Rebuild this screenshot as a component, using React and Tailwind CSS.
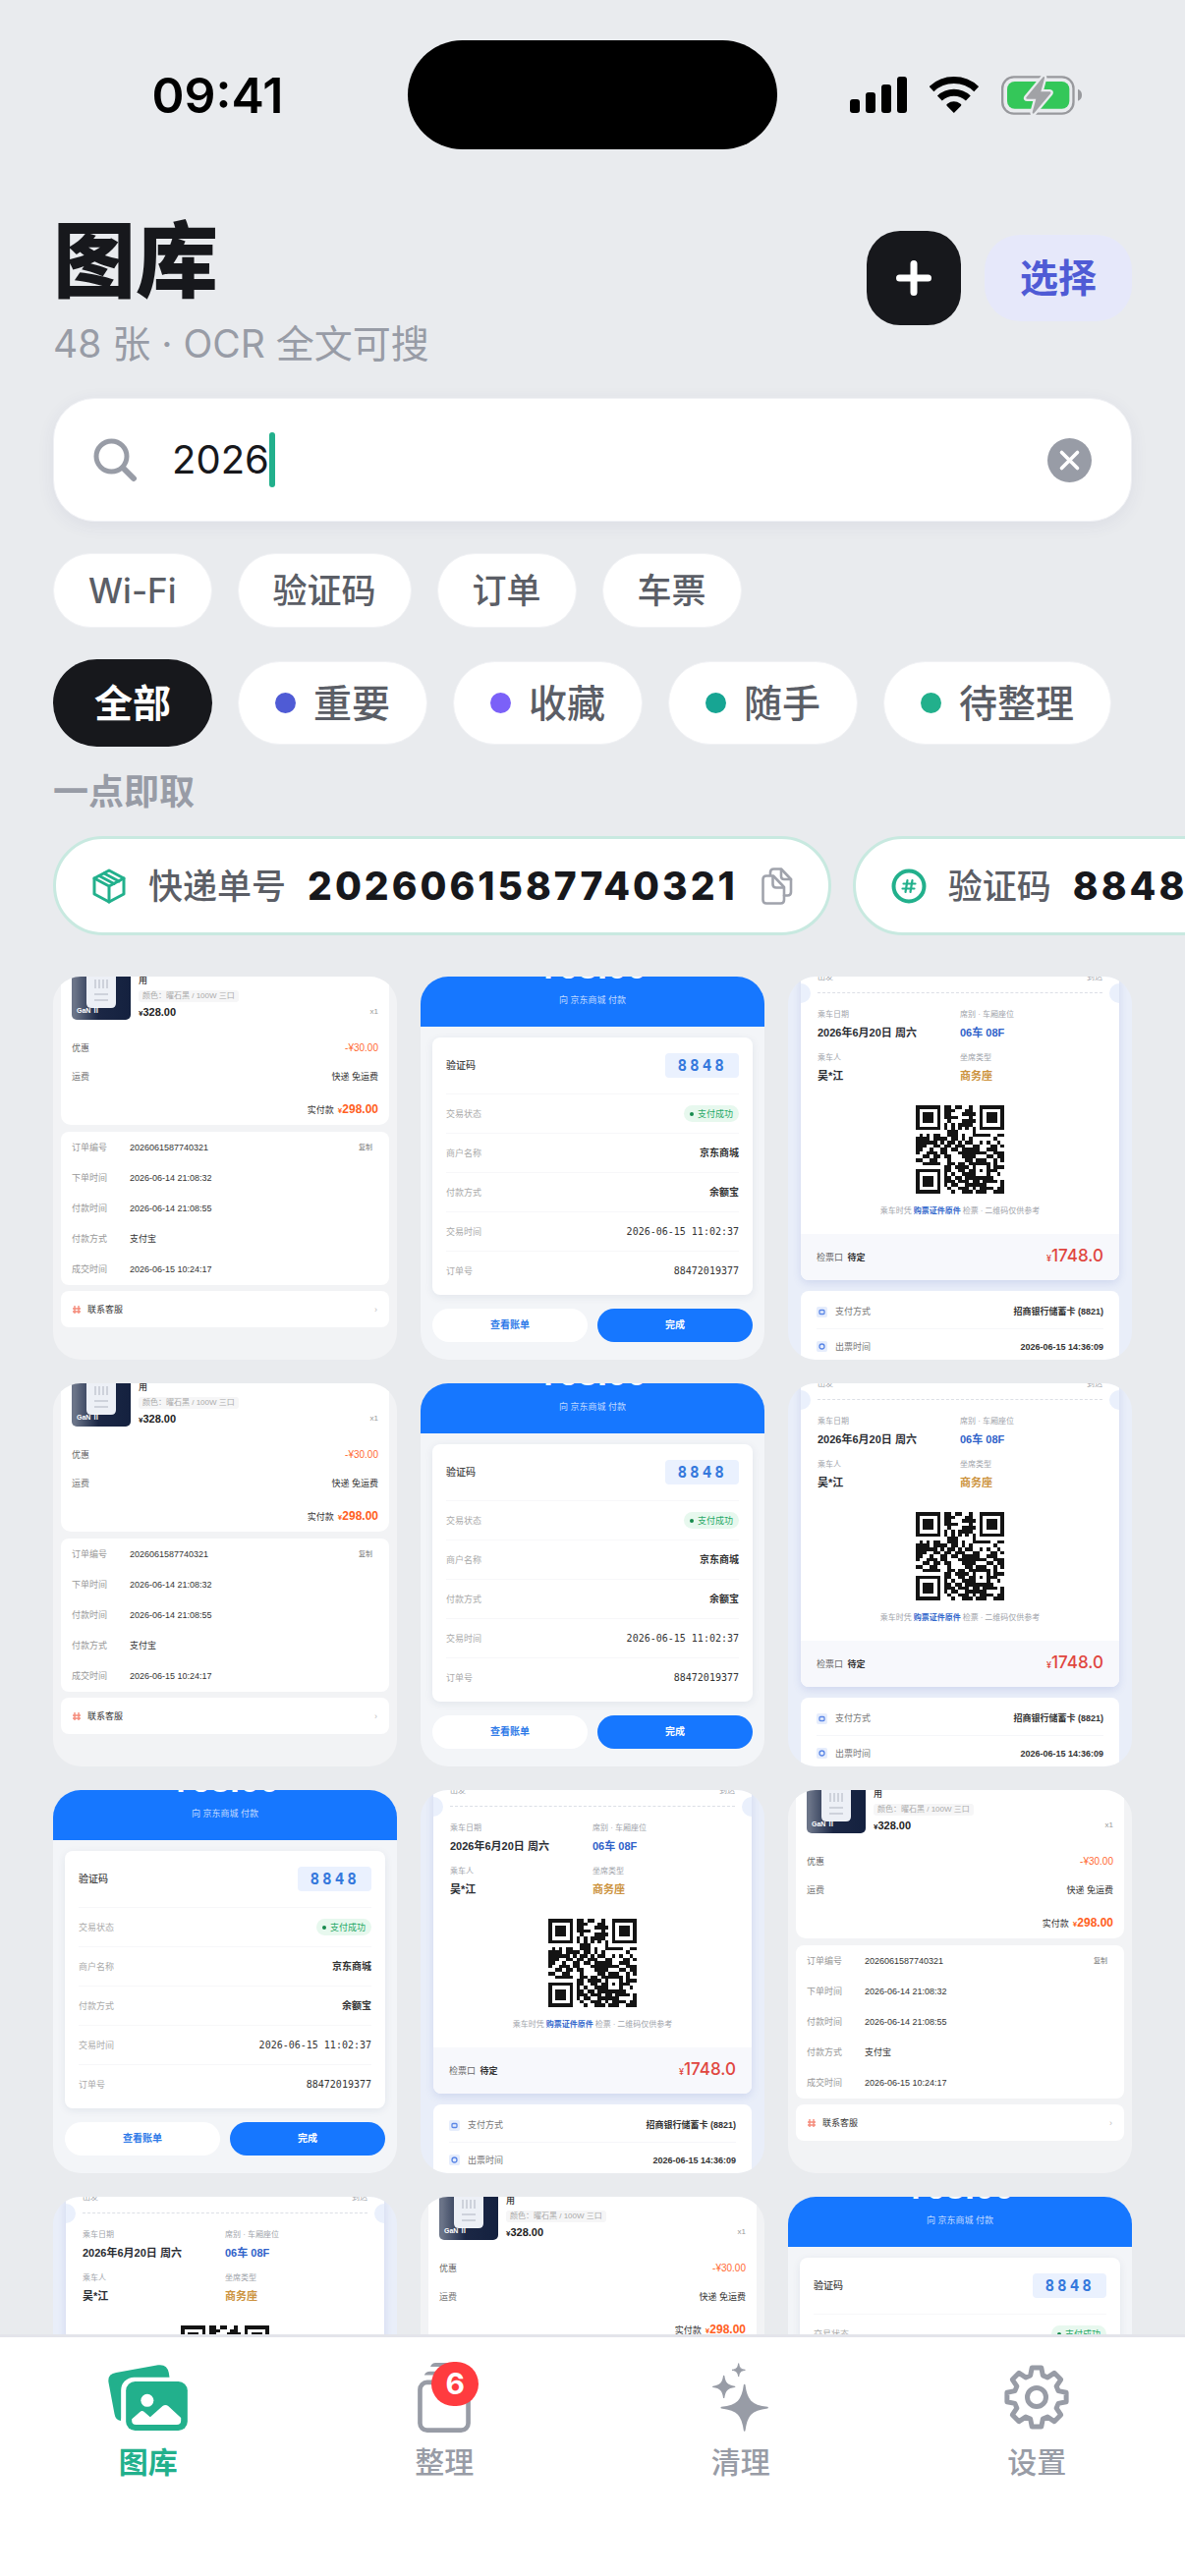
import React, { useState } from 'react';
import clsx from 'clsx';

const quickSearches = ['Wi-Fi', '验证码', '订单', '车票'];

const filters = [
  { id: 'all', label: '全部' },
  { id: 'important', label: '重要', dot: 'bg-[#4f5bd5]' },
  { id: 'favorite', label: '收藏', dot: 'bg-[#7b61f8]' },
  { id: 'casual', label: '随手', dot: 'bg-[#17a593]' },
  { id: 'pending', label: '待整理', dot: 'bg-[#22b08c]' }
];

const shots = [
  'order', 'payment', 'ticket',
  'order', 'payment', 'ticket',
  'payment', 'ticket', 'order',
  'ticket', 'order', 'payment'
];

const qrRows = [
  '1111111011011001001111111',
  '1000001011100011001000001',
  '1011101011000111101011101',
  '1011101011110001001011101',
  '1011101001000111101011101',
  '1000001010101111001000001',
  '1111111010101010101111111',
  '0000000001110000100000000',
  '0101011001110100111110011',
  '1111011110110101000000100',
  '1111110101101011001010010',
  '1110011011011100110001101',
  '1100100110110111110011100',
  '1001110110001111111100111',
  '0011011011000111100011011',
  '1100110001000011011100101',
  '0011111001101101111110100',
  '0000000011011110100010111',
  '1111111011001101101011100',
  '1000001010100111100010010',
  '1011101011011011111111000',
  '1011101011101110110111101',
  '1011101010110011111100001',
  '1000001001001110101111011',
  '1111111000100111011100111'
];

const qrPath = qrRows
  .map((row, y) => row.split('').map((c, x) => (c === '1' ? `M${x} ${y}h1v1h-1z` : '')).join(''))
  .join('');

// Eight-tooth gear outline
const gearPoints = [];
for (let i = 0; i < 8; i++) {
  [[-16, 23], [-9, 30.5], [9, 30.5], [16, 23]].forEach(([offset, r]) => {
    const a = ((i * 45 + offset - 90) * Math.PI) / 180;
    gearPoints.push(`${(33 + r * Math.cos(a)).toFixed(2)},${(33 + r * Math.sin(a)).toFixed(2)}`);
  });
}

// Status bar icons
const SignalIcon = () => (
  <svg className="w-[58px] h-[37px]" viewBox="0 0 174 111">
    <rect x="0" y="69" width="30" height="42" rx="9" />
    <rect x="48" y="48" width="30" height="63" rx="9" />
    <rect x="96" y="24" width="30" height="87" rx="9" />
    <rect x="144" y="0" width="30" height="111" rx="9" />
  </svg>
);

const WifiIcon = () => (
  <svg className="w-[50px] h-[37px]" viewBox="0 0 150 111">
    <g fill="none" stroke="#000" strokeWidth="21">
      <path d="M6 38A100 100 0 0 1 143 38" />
      <path d="M31 66A63 63 0 0 1 118 66" />
    </g>
    <path d="M74.5 111L53 89Q50 86 54 83Q74 69 95 83Q99 86 96 89Z" />
  </svg>
);

const BatteryIcon = () => (
  <svg className="w-[82px] h-[40px]" viewBox="0 0 246 120">
    <rect x="3.500" y="4" width="217" height="112" rx="35" fill="none" stroke="#98999d" strokeWidth="7" />
    <rect x="18" y="18" width="190" height="83" rx="23" fill="#34c759" />
    <path d="M234 41Q246 46 246 59Q246 72 234 77Z" fill="#98999d" />
    <path
      d="M128 4L76 67Q74 71 79 71H106L95 112Q95 119 100 115L151 54Q153 49 148 49H121L132 8Q133 1 128 4Z"
      fill="#a1a2a6"
      stroke="#e9ebee"
      strokeWidth="14"
      paintOrder="stroke"
      strokeLinejoin="round"
    />
  </svg>
);

const SearchIcon = () => (
  <svg className="w-[45px] h-[45px] shrink-0" viewBox="0 0 45 45" fill="none" stroke="#989ca6" strokeLinecap="round">
    <circle cx="18.500" cy="18.500" r="15.500" strokeWidth="5" />
    <path d="M31 31L41 41" strokeWidth="6" />
  </svg>
);

const BoxIcon = () => (
  <svg className="w-[36px] h-[36px] shrink-0" viewBox="0 0 36 36" fill="none" stroke="#22b08c" strokeWidth="3" strokeLinejoin="round" strokeLinecap="round">
    <path d="M18 2L33 10V26L18 34L3 26V10Z" />
    <path d="M3 10L18 18L33 10M18 18V34" />
    <path d="M8 7.500L23 15.500M13 5L28 13" />
  </svg>
);

const HashIcon = () => (
  <svg className="w-[36px] h-[36px] shrink-0" viewBox="0 0 36 36" fill="none" stroke="#22b08c" strokeLinecap="round">
    <circle cx="18" cy="18" r="15.500" strokeWidth="4" />
    <path d="M16.500 12L14.500 24M21.500 12L19.500 24M12.500 15.500H24.500M11.500 20.500H23.500" strokeWidth="2.200" />
  </svg>
);

const CopyIcon = () => (
  <svg className="w-[32px] h-[38px] shrink-0" viewBox="0 0 32 38" fill="none" stroke="#a0a3ac" strokeWidth="2.600" strokeLinejoin="round" strokeLinecap="round">
    <path d="M9 8V5Q9 1.500 12.500 1.500H20L30 12V25Q30 28.500 26.500 28.500H23" />
    <path d="M20 2V9Q20 12 23 12H30" />
    <path d="M1.500 12Q1.500 8.500 5 8.500H12L23 20V33Q23 36.500 19.500 36.500H5Q1.500 36.500 1.500 33Z" />
    <path d="M11.500 9V17Q11.500 20.500 15 20.500H22.500" />
  </svg>
);

// Tab bar icons
const GalleryIcon = () => (
  <svg className="w-[81px] h-[67px]" viewBox="0 0 242 201">
    <path d="M24 24L152 1Q180 -3 185 25L190 60L60 110L38 171Q22 169 19 150L1 54Q-3 28 24 24Z" fill="#22b08c" />
    <rect x="39" y="38" width="220" height="180" rx="40" fill="#fff" />
    <rect x="54" y="51" width="188" height="150" rx="28" fill="#22b08c" />
    <circle cx="119" cy="109" r="19.500" fill="#fff" />
    <path d="M72 166L96 145Q103 138 110 144L128 160L166 126Q175 119 184 127L222 162V170Q222 183 209 183H85Q72 183 72 171Z" fill="#fff" />
  </svg>
);

const StackIcon = () => (
  <svg className="w-[54px] h-[71px]" viewBox="0 0 162 214" fill="#989ca6">
    <path d="M39 12Q43 0 55 0H107Q119 0 123 12Z" />
    <path d="M20 38Q24 26 38 26H124Q138 26 142 38Z" />
    <rect x="7" y="60" width="148" height="147" rx="22" fill="none" stroke="#989ca6" strokeWidth="14" />
  </svg>
);

const SparklesIcon = () => (
  <svg className="w-[57px] h-[70px]" viewBox="0 0 171 210" fill="#989ca6" stroke="#989ca6" strokeLinejoin="round">
    <path strokeWidth="5" d="M98 68C104 115 118 131 168 137C118 143 104 159 98 207C92 159 78 143 28 137C78 131 92 115 98 68Z" />
    <path strokeWidth="4" d="M35 40C38 62 46 70 68 73C46 76 38 84 35 106C32 84 24 76 2 73C24 70 32 62 35 40Z" />
    <path strokeWidth="3" d="M80 2C82 15 87 20 100 22C87 24 82 29 80 42C78 29 73 24 60 22C73 20 78 15 80 2Z" />
  </svg>
);

const GearIcon = () => (
  <svg className="w-[66px] h-[66px]" viewBox="0 0 66 66" fill="none" stroke="#989ca6" strokeWidth="5" strokeLinejoin="round">
    <polygon points={gearPoints.join(' ')} />
    <circle cx="33" cy="33" r="9.500" />
  </svg>
);

// Screenshot thumbnails
const OrderShot = () => (
  <div className="h-full px-2 bg-[#f2f3f5] text-[9px] leading-[12px] text-[#333]">
    <div className="h-[151px] px-[11px] bg-white rounded-b-[10px]">
      <div className="flex gap-2 h-[44px]">
        <div className="relative w-[60px] shrink-0 rounded-b-[5px] bg-linear-to-r from-[#6b7488] from-5% via-[#1b2745] via-45% to-[#14213f]">
          <svg className="absolute left-[15px] top-0 w-[30px] h-[32px]" viewBox="0 0 30 32">
            <path d="M0 0H30V27Q30 32 25 32H5Q0 32 0 27Z" fill="#edf0f6" />
            <path d="M9 3V12M13 3V12M17 3V12M21 3V12M8 18H22M8 24H22" stroke="#c3c8d2" strokeWidth="1.500" />
          </svg>
          <span className="absolute left-[5px] bottom-[3px] text-[7px] leading-[12px] font-bold text-white">GaN Ⅱ</span>
        </div>
        <div className="flex flex-col flex-1 justify-end">
          <div className="font-medium">用</div>
          <div className="self-start px-1 my-1 text-[8px] text-[#aaa] bg-[#f6f6f7] rounded-[3px]">颜色：曜石黑 / 100W 三口</div>
          <div className="flex justify-between">
            <span className="text-[11px] font-bold text-[#222]"><span className="text-[8px]">¥</span>328.00</span>
            <span className="text-[8px] text-[#999]">x1</span>
          </div>
        </div>
      </div>
      <div className="flex justify-between mt-[23px]">
        <span className="text-[#666]">优惠</span>
        <span className="text-[10px] text-[#ff6a33]">-¥30.00</span>
      </div>
      <div className="flex justify-between mt-[17px]">
        <span className="text-[#777]">运费</span>
        <span>快递 免运费</span>
      </div>
      <div className="flex justify-end items-baseline gap-1 mt-[21px]">
        <span>实付款</span>
        <span className="text-[12px] font-bold text-[#ff5f1f]"><span className="text-[8px]">¥</span>298.00</span>
      </div>
    </div>
    <dl className="flex flex-col justify-between h-[156px] mt-[7px] px-[11px] py-[10px] bg-white rounded-[8px]">
      {[
        ['订单编号', '2026061587740321'],
        ['下单时间', '2026-06-14 21:08:32'],
        ['付款时间', '2026-06-14 21:08:55'],
        ['付款方式', '支付宝'],
        ['成交时间', '2026-06-15 10:24:17']
      ].map(([label, value], i) => (
        <div key={label} className="flex">
          <dt className="w-[59px] text-[#999]">{label}</dt>
          <dd className="flex-1">{value}</dd>
          {i === 0 && <dd className="pr-[6px] text-[7px] text-[#777]">复制</dd>}
        </div>
      ))}
    </dl>
    <div className="flex items-center h-[37px] mt-[6px] px-[12px] bg-white rounded-[8px]">
      <svg className="w-[8px] h-[8px] mr-[7px]" viewBox="0 0 8 8" stroke="#f58a7a" strokeWidth="1.400" fill="none">
        <path d="M2 0V8M6 0V8M0 3H8M0 6H8" />
      </svg>
      <span>联系客服</span>
      <span className="ml-auto text-[#bbb]">›</span>
    </div>
  </div>
);

const PaymentShot = () => (
  <div className="h-full bg-[#f3f5f8] text-[9px] leading-[12px]">
    <div className="h-[51px] overflow-hidden text-center text-white bg-[#1677ff]">
      <div className="flex flex-col justify-end h-[30px]">
        <div className="text-[36px] leading-[30px] font-bold">¥68.00</div>
        <div className="h-[13px] shrink-0" />
        <div className="text-[#c2dbff]">向 京东商城 付款</div>
      </div>
    </div>
    <dl className="mx-3 mt-[11px] px-[14px] pb-1 bg-white rounded-[8px] shadow-[0_2px_8px_rgba(30,50,90,0.08)]">
      <div className="flex items-center justify-between h-[58px] border-b border-[#f7f7f9]">
        <dt className="text-[10px] font-medium text-[#444]">验证码</dt>
        <dd className="px-[12px] text-[16px] leading-[25px] font-bold tracking-[3px] text-[#3478dc] bg-[#eaf1fe] rounded-[4px] font-['DejaVu_Sans_Mono',monospace]">8848</dd>
      </div>
      <div className="flex items-center justify-between h-10 border-b border-[#f7f7f9]">
        <dt className="text-[#aaa]">交易状态</dt>
        <dd className="flex items-center gap-1 h-[17px] px-[6px] text-[#28a866] bg-[#e7f8ee] rounded-full">
          <span className="w-1 h-1 rounded-full bg-[#168a4c]" />
          支付成功
        </dd>
      </div>
      {[
        ['商户名称', '京东商城', false],
        ['付款方式', '余额宝', false],
        ['交易时间', '2026-06-15 11:02:37', true],
        ['订单号', '88472019377', true]
      ].map(([label, value, mono]) => (
        <div key={label} className="flex items-center justify-between h-10 border-b border-[#f7f7f9] last:border-0">
          <dt className="text-[#aaa]">{label}</dt>
          <dd className={clsx('text-[#333]', mono ? "text-[10px] font-['DejaVu_Sans_Mono',monospace]" : 'text-[10px] font-bold')}>
            {value}
          </dd>
        </div>
      ))}
    </dl>
    <div className="grid grid-cols-2 gap-[10px] mx-3 mt-[14px] text-[10px] font-bold text-center leading-[34px]">
      <div className="text-[#2f7be8] bg-white rounded-full">查看账单</div>
      <div className="text-white bg-[#1677ff] rounded-full">完成</div>
    </div>
  </div>
);

const TicketShot = () => (
  <div className="h-full px-[13px] bg-[#e9eef9] text-[8px] leading-[12px] text-[#a0a3aa]">
    <div className="relative h-[309px] overflow-hidden bg-white rounded-b-[8px] shadow-[0_3px_8px_rgba(60,90,180,0.15)]">
      <div className="flex justify-between h-[7px] items-end px-[17px]">
        <span>出发</span>
        <span>到达</span>
      </div>
      <div className="mx-[17px] mt-[9px] border-t border-dashed border-[#dcdfe6]" />
      <span className="absolute -left-[10px] top-[7px] w-5 h-5 rounded-full bg-[#eaf0fc]" />
      <span className="absolute -right-[10px] top-[7px] w-5 h-5 rounded-full bg-[#eaf0fc]" />
      <div className="grid grid-cols-2 gap-y-[12px] px-[17px] mt-[16px]">
        {[
          ['乘车日期', '2026年6月20日 周六', 'text-[#2a2d33]'],
          ['席别 · 车厢座位', '06车 08F', 'text-[#2f62c9]'],
          ['乘车人', '吴*江', 'text-[#2a2d33]'],
          ['坐席类型', '商务座', 'text-[#cc9340]']
        ].map(([label, value, color]) => (
          <div key={label}>
            <div>{label}</div>
            <div className={clsx('mt-[4px] text-[11px] leading-[16px] font-bold', color)}>{value}</div>
          </div>
        ))}
      </div>
      <svg className="block mx-auto mt-[22px] w-[90px] h-[90px]" viewBox="0 0 25 25" shapeRendering="crispEdges">
        <path d={qrPath} fill="#141414" />
      </svg>
      <div className="flex justify-center gap-[2px] mt-[12px]">
        <span>乘车时凭</span>
        <b className="text-[#3468cc]">购票证件原件</b>
        <span>检票</span>
        <span>·</span>
        <span>二维码仅供参考</span>
      </div>
      <div className="absolute inset-x-0 bottom-0 flex items-center justify-between h-[47px] px-[16px] text-[9px] bg-[#f7f8fc]">
        <span className="text-[#666]">检票口 <b className="ml-[2px] text-[#333]">待定</b></span>
        <span className="text-[17px] font-medium text-[#e0463f] font-['Inter',sans-serif]"><span className="text-[9px]">¥</span>1748.0</span>
      </div>
    </div>
    <div className="h-[78px] mt-[11px] px-[16px] pt-1 bg-white rounded-t-[8px] text-[9px]">
      {[
        ['支付方式', '招商银行储蓄卡 (8821)'],
        ['出票时间', '2026-06-15 14:36:09']
      ].map(([label, value], i) => (
        <div key={label} className="flex items-center h-[35px] border-b border-[#f5f6f9] last:border-0">
          <svg className="w-[11px] h-[11px] mr-2" viewBox="0 0 11 11" fill="none" stroke="#5b87e6" strokeWidth="1.300">
            <rect width="11" height="11" rx="2" fill="#e6edfc" stroke="none" />
            {i === 0 ? <rect x="3" y="3.500" width="5" height="4" rx="1" /> : <circle cx="5.500" cy="5.500" r="2.500" />}
          </svg>
          <span className="text-[#777]">{label}</span>
          <b className="ml-auto text-[#333]">{value}</b>
        </div>
      ))}
    </div>
  </div>
);

const shotViews = { order: OrderShot, payment: PaymentShot, ticket: TicketShot };
const shotLabels = { order: '订单截图', payment: '付款截图', ticket: '车票截图' };

const tabs = [
  { id: 'gallery', label: '图库', Icon: GalleryIcon },
  { id: 'organize', label: '整理', Icon: StackIcon, badge: 6 },
  { id: 'clean', label: '清理', Icon: SparklesIcon },
  { id: 'settings', label: '设置', Icon: GearIcon }
];

const Extract = ({ Icon, label, value }) => (
  <button type="button" className="flex items-center shrink-0 h-[101px] px-[36px] bg-white border-3 border-[#c8e9e0] rounded-full">
    <Icon />
    <span className="ml-[22px] text-[35px] leading-[48px] font-medium text-[#5b5e66]">{label}</span>
    <span className="ml-[22px] mr-[24px] text-[39px] leading-[48px] font-extrabold tracking-[3px] text-[#17181c]">{value}</span>
    <CopyIcon />
  </button>
);

const App = () => {
  const [query, setQuery] = useState('2026');
  const [filter, setFilter] = useState('all');
  const [tab, setTab] = useState('gallery');

  return (
    <div className="flex flex-col h-screen overflow-hidden bg-[#e9ebee] text-[#17181c] font-['Inter','Noto_Sans_CJK_SC',sans-serif]">
      {/* Status bar */}
      <div className="grid grid-cols-[1fr_auto_1fr] items-center shrink-0 pt-[41px]">
        <div className="pl-[28px] text-center text-[50px] leading-[60px] font-semibold text-black">09:41</div>
        <div className="w-[376px] h-[111px] rounded-full bg-black" />
        <div className="flex items-center justify-center gap-[23px] pr-[32px]">
          <SignalIcon />
          <WifiIcon />
          <BatteryIcon />
        </div>
      </div>

      <main className="flex-1 min-h-0 px-[54px] pt-[72px] overflow-y-auto [scrollbar-width:none]">
        <header className="flex items-start justify-between">
          <div>
            <h1 className="text-[84px] leading-[84px] font-black">图库</h1>
            <p className="mt-[18px] text-[39px] leading-[48px] text-[#989ca6]">48 张 · OCR 全文可搜</p>
          </div>
          <div className="flex items-center gap-[24px] pt-[11px]">
            <button type="button" aria-label="添加" className="flex items-center justify-center w-[96px] h-[96px] rounded-[34px] bg-[#17181c]">
              <svg className="w-[36px] h-[36px]" viewBox="0 0 36 36" stroke="#fff" strokeWidth="7" strokeLinecap="round">
                <path d="M18 3.500V32.500M3.500 18H32.500" />
              </svg>
            </button>
            <button type="button" className="h-[88px] px-[36px] rounded-[36px] bg-[#e6e8fa] text-[39px] leading-[48px] font-bold text-[#4f5bd5]">
              选择
            </button>
          </div>
        </header>

        {/* Search */}
        <div className="flex items-center h-[126px] mt-[31px] px-[40px] bg-white border border-[#f0f1f5] rounded-[42px] shadow-[0_4px_18px_rgba(60,60,120,0.07)]">
          <SearchIcon />
          <input
            type="text"
            aria-label="搜索"
            value={query}
            onChange={(e) => setQuery(e.target.value)}
            className="ml-[35px] text-[40px] leading-[56px] caret-[#22b08c] outline-none [field-sizing:content]"
          />
          <span className="w-[6px] h-[56px] rounded-full bg-[#22b08c]" />
          <button type="button" aria-label="清除" onClick={() => setQuery('')} className="ml-auto">
            <svg className="block w-[45px] h-[45px]" viewBox="0 0 45 45">
              <circle cx="22.500" cy="22.500" r="22.500" fill="#989ca6" />
              <path d="M14.500 14.500L30.500 30.500M30.500 14.500L14.500 30.500" stroke="#fff" strokeWidth="3.600" strokeLinecap="round" />
            </svg>
          </button>
        </div>

        <div className="flex gap-[26px] mt-[32px]">
          {quickSearches.map((text) => (
            <button
              key={text}
              type="button"
              onClick={() => setQuery(text)}
              className="h-[76px] px-[35px] bg-white border border-[#f1f2f5] rounded-full text-[35px] leading-[48px] font-medium text-[#5b5e66] whitespace-nowrap"
            >
              {text}
            </button>
          ))}
        </div>

        {/* Filters */}
        <div className="flex items-center gap-[26px] mt-[32px]">
          {filters.map((f) => (
            <button
              key={f.id}
              type="button"
              onClick={() => setFilter(f.id)}
              className={clsx(
                'flex items-center gap-[18px] rounded-full text-[39px] leading-[48px] whitespace-nowrap',
                filter === f.id
                  ? 'h-[89px] px-[42px] bg-[#17181c] font-bold text-white'
                  : 'h-[85px] px-[37px] bg-white border border-[#f1f2f5] font-medium text-[#5b5e66]'
              )}
            >
              {f.dot && <span className={clsx('w-[21px] h-[21px] rounded-full', f.dot)} />}
              {f.label}
            </button>
          ))}
        </div>

        <h2 className="mt-[22px] text-[36px] leading-[48px] font-bold text-[#989ca6]">一点即取</h2>
        <div className="flex gap-[22px] mt-[21px] -mr-[54px] overflow-x-auto [scrollbar-width:none]">
          <Extract Icon={BoxIcon} label="快递单号" value="2026061587740321" />
          <Extract Icon={HashIcon} label="验证码" value="8848" />
        </div>

        {/* Screenshots */}
        <div className="grid grid-cols-3 gap-[24px] mt-[42px] font-['Liberation_Sans','Noto_Sans_CJK_SC',sans-serif]">
          {shots.map((kind, i) => {
            const Shot = shotViews[kind];
            return (
              <article key={i} aria-label={shotLabels[kind]} className="h-[390px] overflow-hidden rounded-[28px]">
                <Shot />
              </article>
            );
          })}
        </div>
      </main>

      {/* Tab bar */}
      <nav className="grid grid-cols-4 shrink-0 pt-[25px] pb-[98px] bg-white border-t-3 border-[#e3e4ea]">
        {tabs.map(({ id, label, Icon, badge }) => (
          <button key={id} type="button" onClick={() => setTab(id)} className="flex flex-col items-center gap-[12px]">
            <span className="relative flex items-center h-[72px]">
              <Icon />
              {badge && (
                <span className="absolute left-[14px] top-0 w-[48px] h-[45px] rounded-full bg-[#ff3b3f] text-[30px] leading-[45px] font-bold text-center text-white">
                  {badge}
                </span>
              )}
            </span>
            <span className={clsx('text-[30px] leading-[36px]', tab === id ? 'font-bold text-[#22b08c]' : 'font-medium text-[#989ca6]')}>
              {label}
            </span>
          </button>
        ))}
      </nav>
    </div>
  );
};

export default App;
